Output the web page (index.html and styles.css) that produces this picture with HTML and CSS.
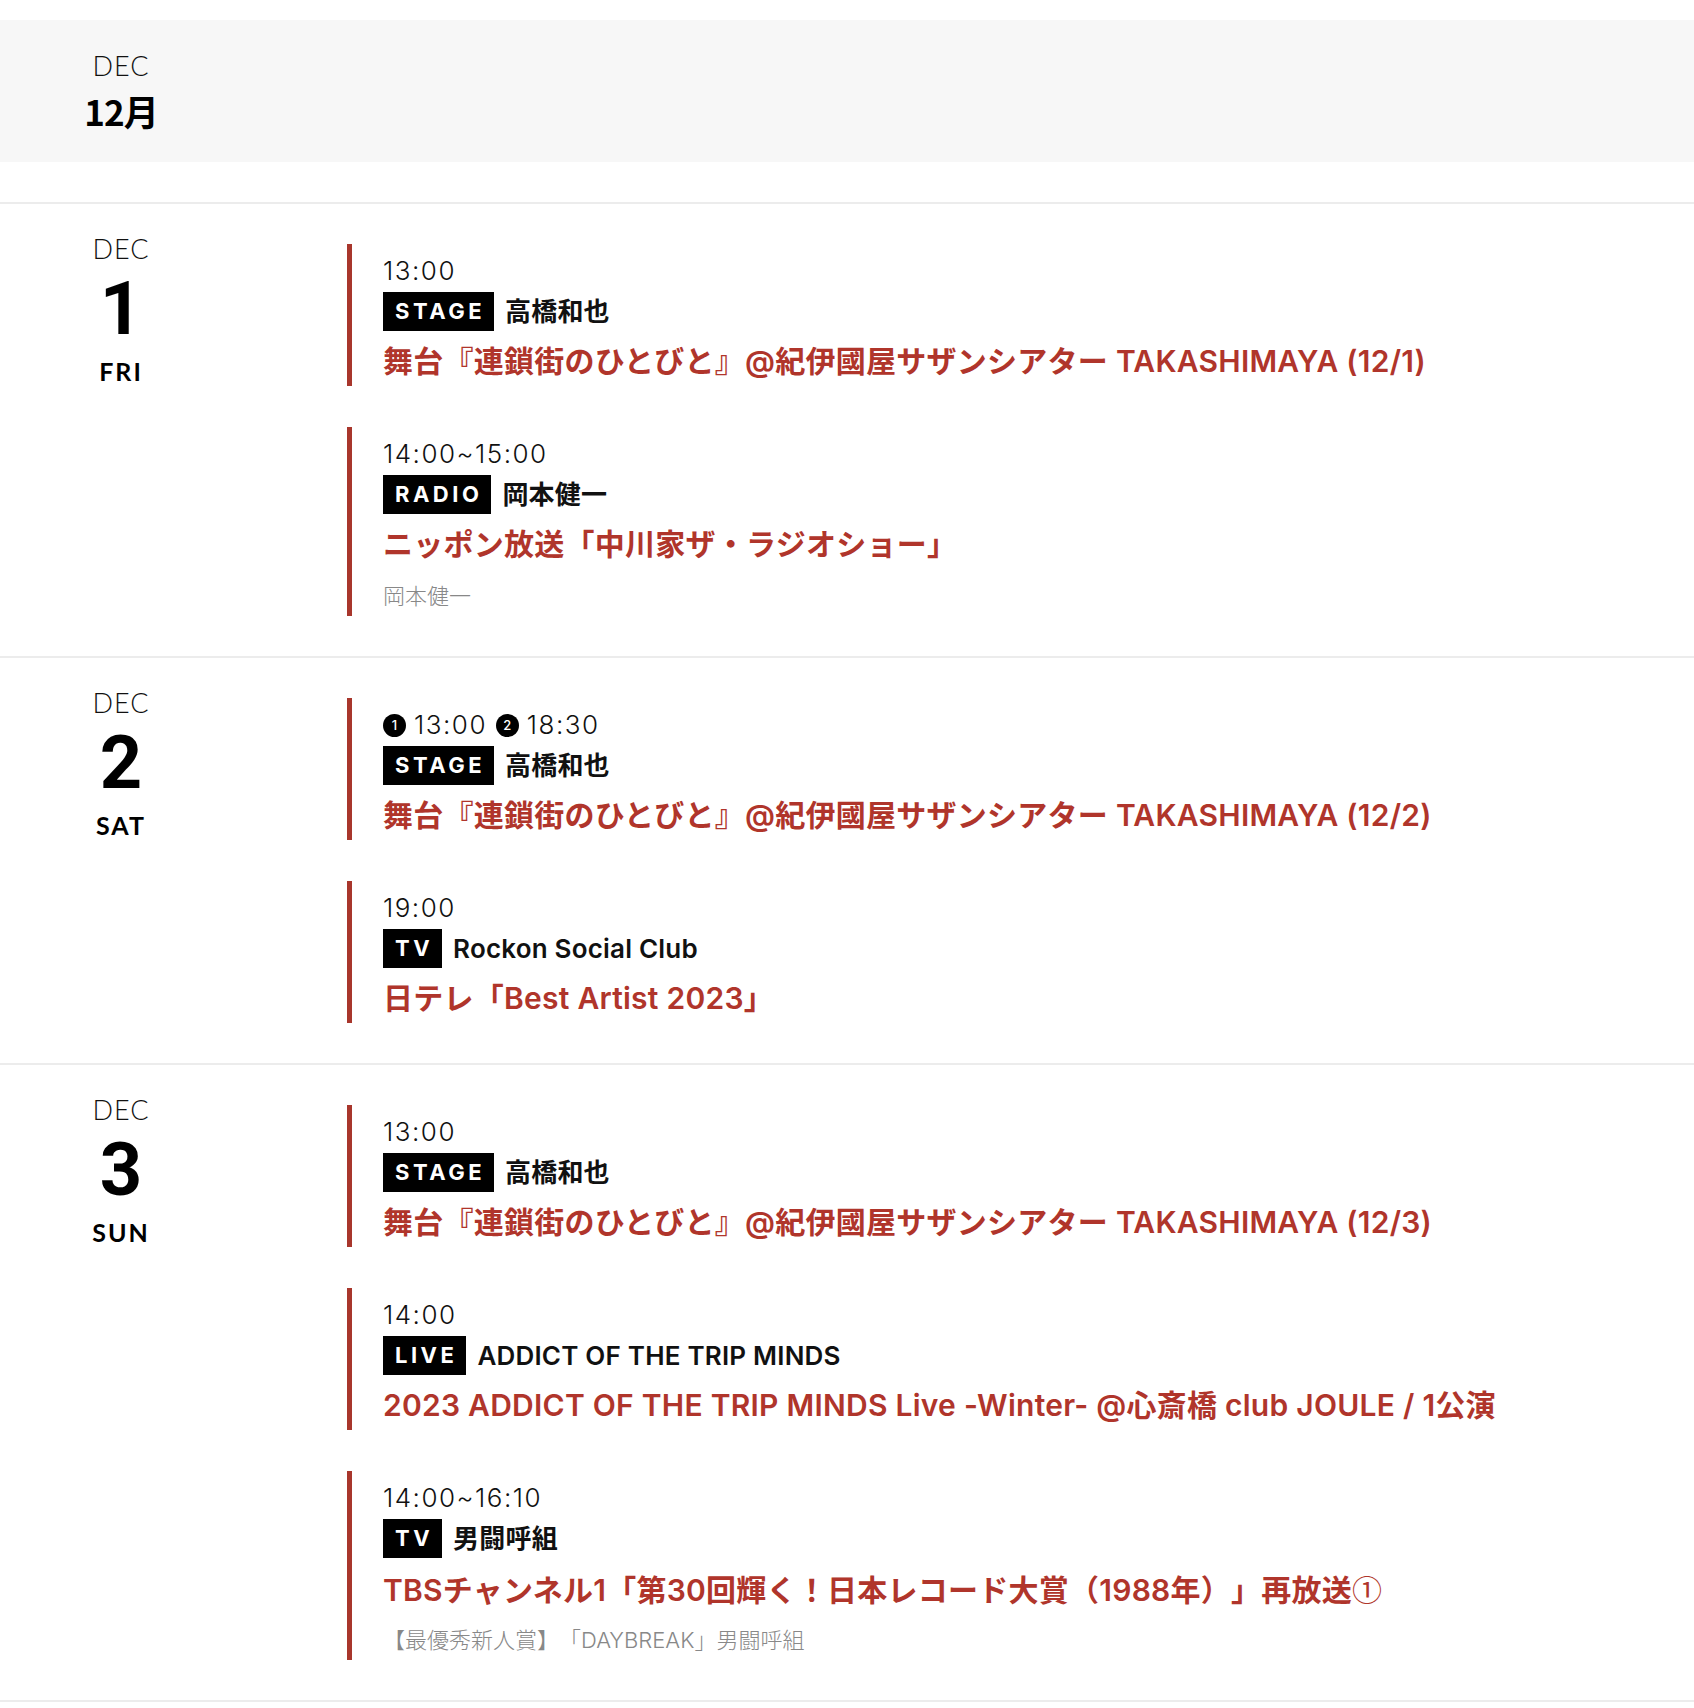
FILE: index.html
```html
<!DOCTYPE html>
<html lang="ja">
<head>
<meta charset="utf-8">
<title>Schedule</title>
<link rel="stylesheet" href="styles.css">
</head>
<body>
<div class="page">
  <header class="month">
    <div class="datecol">
      <div class="mon">DEC</div>
      <div class="month-jp">12月</div>
    </div>
  </header>

  <section class="day">
    <div class="datecol daycol">
      <div class="mon">DEC</div>
      <div class="num">1</div>
      <div class="dow">FRI</div>
    </div>
    <div class="events">
      <article class="event">
        <div class="time">13:00</div>
        <div class="meta"><span class="badge">STAGE</span><span class="who">高橋和也</span></div>
        <div class="title">舞台『連鎖街のひとびと』@紀伊國屋サザンシアター TAKASHIMAYA (12/1)</div>
      </article>
      <article class="event">
        <div class="time">14:00~15:00</div>
        <div class="meta"><span class="badge">RADIO</span><span class="who">岡本健一</span></div>
        <div class="title">ニッポン放送「中川家ザ・ラジオショー」</div>
        <div class="sub">岡本健一</div>
      </article>
    </div>
  </section>

  <section class="day">
    <div class="datecol daycol">
      <div class="mon">DEC</div>
      <div class="num">2</div>
      <div class="dow">SAT</div>
    </div>
    <div class="events">
      <article class="event">
        <div class="time"><span class="circ">1</span>13:00 <span class="circ">2</span>18:30</div>
        <div class="meta"><span class="badge">STAGE</span><span class="who">高橋和也</span></div>
        <div class="title">舞台『連鎖街のひとびと』@紀伊國屋サザンシアター TAKASHIMAYA (12/2)</div>
      </article>
      <article class="event">
        <div class="time">19:00</div>
        <div class="meta"><span class="badge">TV</span><span class="who">Rockon Social Club</span></div>
        <div class="title">日テレ「Best Artist 2023」</div>
      </article>
    </div>
  </section>

  <section class="day last">
    <div class="datecol daycol">
      <div class="mon">DEC</div>
      <div class="num">3</div>
      <div class="dow">SUN</div>
    </div>
    <div class="events">
      <article class="event">
        <div class="time">13:00</div>
        <div class="meta"><span class="badge">STAGE</span><span class="who">高橋和也</span></div>
        <div class="title">舞台『連鎖街のひとびと』@紀伊國屋サザンシアター TAKASHIMAYA (12/3)</div>
      </article>
      <article class="event">
        <div class="time">14:00</div>
        <div class="meta"><span class="badge">LIVE</span><span class="who">ADDICT OF THE TRIP MINDS</span></div>
        <div class="title">2023 ADDICT OF THE TRIP MINDS Live -Winter- @心斎橋 club JOULE / 1公演</div>
      </article>
      <article class="event">
        <div class="time">14:00~16:10</div>
        <div class="meta"><span class="badge">TV</span><span class="who">男闘呼組</span></div>
        <div class="title">TBSチャンネル1「第30回輝く！日本レコード大賞（1988年）」再放送<span class="cj">①</span></div>
        <div class="sub">【最優秀新人賞】「DAYBREAK」男闘呼組</div>
      </article>
    </div>
  </section>
</div>
</body>
</html>
```

FILE: styles.css
```css
html, body {
  margin: 0;
  padding: 0;
  background: #ffffff;
}

body {
  font-family: Inter, "Noto Sans CJK JP", sans-serif;
  color: #111111;
  text-spacing-trim: space-all;
}

.page {
  padding-top: 20px;
}

.month {
  background: #f7f7f7;
  padding: 31px 0;
  margin-bottom: 40px;
  display: grid;
  grid-template-columns: 242px 1fr;
}

.datecol {
  display: flex;
  flex-direction: column;
  align-items: center;
}

.mon {
  font-family: Lato, sans-serif;
  font-weight: 300;
  font-size: 27px;
  line-height: 30px;
  letter-spacing: 1px;
  color: #111111;
}

.month-jp {
  margin-top: 10px;
  font-family: "Noto Sans CJK JP", sans-serif;
  font-weight: 700;
  font-size: 35px;
  line-height: 40px;
  letter-spacing: -1px;
  color: #000000;
}

.day {
  display: grid;
  grid-template-columns: 242px 1fr;
  column-gap: 105px;
  border-top: 2px solid #ececec;
  padding: 40px 0;
}

.day.last {
  border-bottom: 2px solid #ececec;
}

.daycol {
  margin-top: -10px;
}

.num {
  margin-top: 9px;
  font-family: Roboto, sans-serif;
  font-weight: 700;
  font-size: 74px;
  line-height: 72px;
  color: #000000;
}

.dow {
  margin-top: 11px;
  font-family: Lato, sans-serif;
  font-weight: 700;
  font-size: 25px;
  line-height: 30px;
  letter-spacing: 2px;
  color: #000000;
}

.events {
  display: flex;
  flex-direction: column;
  gap: 41px;
}

.event {
  border-left: 5px solid #a8362c;
  padding: 10px 0 5px 31px;
}

.time {
  height: 34px;
  font-family: Inter, "Noto Sans CJK JP", sans-serif;
  font-weight: 300;
  font-size: 26px;
  line-height: 34px;
  letter-spacing: 1.5px;
  color: #111111;
  display: flex;
  align-items: center;
  white-space: pre;
}

.circ {
  display: inline-flex;
  align-items: center;
  justify-content: center;
  width: 23px;
  height: 23px;
  border-radius: 50%;
  background: #000000;
  color: #ffffff;
  font-family: Inter, sans-serif;
  font-weight: 500;
  font-size: 13px;
  line-height: 1;
  margin-right: 8px;
  letter-spacing: 0;
}

.meta {
  margin-top: 4px;
  display: flex;
  align-items: center;
  gap: 11px;
  height: 39px;
}

.badge {
  display: inline-block;
  background: #000000;
  color: #ffffff;
  font-family: Inter, sans-serif;
  font-weight: 700;
  font-size: 22px;
  letter-spacing: 3.5px;
  height: 39px;
  line-height: 39px;
  padding: 0 9px 0 12px;
}

.who {
  font-family: Inter, "Noto Sans CJK JP", sans-serif;
  font-weight: 600;
  font-size: 26px;
  line-height: 39px;
  letter-spacing: 0.2px;
  color: #111111;
}

.title {
  height: 40px;
  margin-top: 10px;
  font-family: Inter, "Noto Sans CJK JP", sans-serif;
  font-weight: 600;
  font-size: 30px;
  line-height: 40px;
  letter-spacing: 0.25px;
  color: #b0352b;
  white-space: nowrap;
}

.cj {
  font-family: "Noto Sans CJK JP", sans-serif;
  font-weight: 400;
}

.sub {
  height: 30px;
  margin-top: 17px;
  font-family: Inter, "Noto Sans CJK JP", sans-serif;
  font-weight: 300;
  font-size: 22px;
  line-height: 30px;
  color: #888888;
}
```
